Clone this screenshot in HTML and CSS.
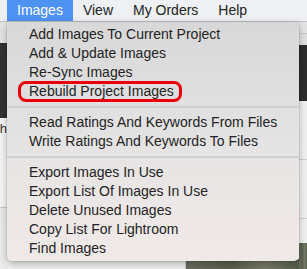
FILE: index.html
```html
<!DOCTYPE html>
<html lang="en">
<head>
    <meta charset="UTF-8">
    <meta name="viewport" content="width=device-width, initial-scale=1.0">
    <title>Images menu</title>
    <link rel="stylesheet" href="styles.css">
</head>
<body>
    <div class="menubar">
        <span class="menubar-item open">Images</span>
        <span class="menubar-item">View</span>
        <span class="menubar-item">My Orders</span>
        <span class="menubar-item">Help</span>
    </div>

    <!-- окно приложения за меню -->
    <div class="window">
        <div class="strip strip-left">
            <div class="band toolbar"></div>
            <div class="band dark-left"></div>
            <div class="band search"><span>ch</span></div>
            <div class="band pane-left"></div>
        </div>
        <div class="middle">
            <div class="band under-menu"></div>
            <div class="bottom-row">
                <div class="band bottom-light"></div>
                <div class="band photo"></div>
            </div>
        </div>
        <div class="strip strip-right">
            <div class="band toolbar-right"></div>
            <div class="band header-right"></div>
            <div class="band dark-right"></div>
            <div class="band row-right"></div>
            <div class="band row-right"></div>
            <div class="band row-right short"></div>
            <div class="band photo grow"></div>
        </div>
    </div>

    <div class="menu">
        <div class="menu-item">Add Images To Current Project</div>
        <div class="menu-item">Add &amp; Update Images</div>
        <div class="menu-item">Re-Sync Images</div>
        <div class="menu-item marked">Rebuild Project Images</div>
        <div class="separator"></div>
        <div class="menu-item">Read Ratings And Keywords From Files</div>
        <div class="menu-item">Write Ratings And Keywords To Files</div>
        <div class="separator"></div>
        <div class="menu-item">Export Images In Use</div>
        <div class="menu-item">Export List Of Images In Use</div>
        <div class="menu-item">Delete Unused Images</div>
        <div class="menu-item">Copy List For Lightroom</div>
        <div class="menu-item">Find Images</div>
    </div>
</body>
</html>
```

FILE: styles.css
```css
body {
    margin: 0;
    width: 307px;
    height: 269px;
    overflow: hidden;
    position: relative;
    font-family: "Liberation Sans", Arial, sans-serif;
    font-size: 14px;
    color: #232323;
    background: #f0f0f0;
}

.menubar {
    height: 21px;
    display: flex;
    padding-left: 7px;
    background: #eef0f3;
    border-bottom: 1px solid #c4c4c4;
}

.menubar-item {
    display: flex;
    align-items: center;
    padding: 0 10px;
    line-height: 21px;
    color: #222;
}

.menubar-item.open {
    background: #4e92f4;
    color: #ffffff;
}

/* фон: окно приложения */
.window {
    display: flex;
    height: 247px;
}

.strip {
    display: flex;
    flex-direction: column;
}

.strip-left {
    width: 7px;
}

.strip-right {
    width: 8px;
}

.middle {
    flex: 1;
    display: flex;
    flex-direction: column;
}

.under-menu {
    flex: 1;
    background: #e9e9e9;
}

.bottom-row {
    display: flex;
    height: 10px;
}

.bottom-light {
    width: 178px;
    background: #f1f1f1;
    border-right: 1px solid #cfcfcf;
}

.photo {
    flex: 1;
    background: linear-gradient(90deg, #6b6e5f, #5a5f4e 40%, #7a7a6a 70%, #55604c);
}

.toolbar {
    height: 21px;
    background: #e4e4e4;
}

.dark-left {
    height: 75px;
    background: #323232;
}

.search {
    height: 89px;
    background: #f6f6f6;
    border-bottom: 1px solid #c8c8c8;
    overflow: hidden;
    display: flex;
    justify-content: flex-end;
}

.search span {
    margin-top: 4px;
    line-height: 14px;
    font-size: 13px;
    color: #333;
}

.pane-left {
    flex: 1;
    background: #ececec;
}

.toolbar-right {
    height: 11px;
    background: #e6e6e6;
    border-bottom: 1px solid #cacaca;
}

.header-right {
    height: 11px;
    background: #e1e1e1;
}

.dark-right {
    height: 56px;
    background: #2d2d2d;
}

.row-right {
    height: 58px;
    background: #f2f2f2;
    border-bottom: 1px solid #d4d4d4;
}

.row-right.short {
    height: 24px;
    border-bottom: none;
}

.grow {
    flex: 1;
}

/* выпадающее меню */
.menu {
    position: absolute;
    top: 22px;
    left: 7px;
    width: 292px;
    box-sizing: border-box;
    padding: 3px 0 3px;
    background: linear-gradient(180deg, #d8d8d8 0%, #e3e2e2 45%, #ede8e7 80%, #efe9e8 100%);
    border-radius: 0 0 5px 5px;
    box-shadow: 0 3px 8px rgba(0, 0, 0, 0.28), 0 0 0 1px rgba(0, 0, 0, 0.06);
}

.menu-item {
    position: relative;
    height: 19px;
    line-height: 19px;
    padding-left: 22px;
    white-space: nowrap;
}

.menu-item.marked::after {
    content: "";
    position: absolute;
    left: 11px;
    top: -1px;
    width: 164px;
    height: 21px;
    box-sizing: border-box;
    border: 3px solid #e8000c;
    border-radius: 8px;
}

.separator {
    height: 2px;
    margin: 5px 0;
    background: #cfcfcf;
}
```
